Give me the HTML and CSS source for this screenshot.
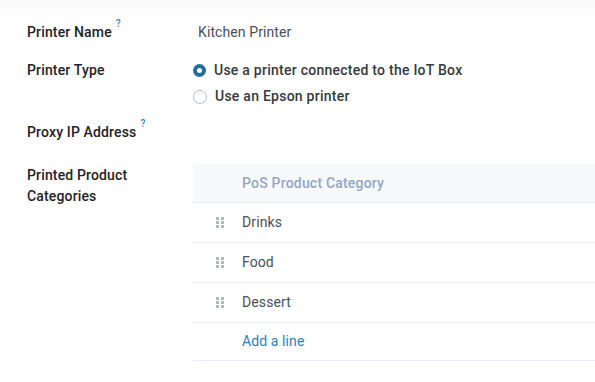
FILE: index.html
```html
<!DOCTYPE html>
<html lang="en">
<head>
    <meta charset="UTF-8">
    <title>Printer</title>
    <link rel="stylesheet" href="styles.css">
</head>
<body>
    <div class="sheet">
        <div class="field field-name">
            <div class="label">Printer Name<sup class="help">?</sup></div>
            <div class="value">Kitchen Printer</div>
        </div>
        <div class="field field-type">
            <div class="label">Printer Type</div>
            <div class="value radios">
                <div class="radio checked"><span class="dot"></span>Use a printer connected to the IoT Box</div>
                <div class="radio"><span class="dot"></span>Use an Epson printer</div>
            </div>
        </div>
        <div class="field field-proxy">
            <div class="label">Proxy IP Address<sup class="help">?</sup></div>
            <div class="value"></div>
        </div>
        <div class="field field-categ">
            <div class="label">Printed Product Categories</div>
            <div class="value">
                <table class="list">
                    <thead>
                        <tr><th class="handle-col"></th><th>PoS Product Category</th></tr>
                    </thead>
                    <tbody>
                        <tr><td class="handle-col"><svg class="handle" width="8" height="11" viewBox="0 0 8 11"><rect x="0" y="0" width="3" height="3"/><rect x="5" y="0" width="3" height="3"/><rect x="0" y="4" width="3" height="3"/><rect x="5" y="4" width="3" height="3"/><rect x="0" y="8" width="3" height="3"/><rect x="5" y="8" width="3" height="3"/></svg></td><td>Drinks</td></tr>
                        <tr><td class="handle-col"><svg class="handle" width="8" height="11" viewBox="0 0 8 11"><rect x="0" y="0" width="3" height="3"/><rect x="5" y="0" width="3" height="3"/><rect x="0" y="4" width="3" height="3"/><rect x="5" y="4" width="3" height="3"/><rect x="0" y="8" width="3" height="3"/><rect x="5" y="8" width="3" height="3"/></svg></td><td>Food</td></tr>
                        <tr><td class="handle-col"><svg class="handle" width="8" height="11" viewBox="0 0 8 11"><rect x="0" y="0" width="3" height="3"/><rect x="5" y="0" width="3" height="3"/><rect x="0" y="4" width="3" height="3"/><rect x="5" y="4" width="3" height="3"/><rect x="0" y="8" width="3" height="3"/><rect x="5" y="8" width="3" height="3"/></svg></td><td>Dessert</td></tr>
                        <tr class="add-row"><td class="handle-col"></td><td><a href="#">Add a line</a></td></tr>
                    </tbody>
                </table>
            </div>
        </div>
    </div>
</body>
</html>
```

FILE: styles.css
```css
html {
    background: #fff;
}
body {
    margin: 0;
    min-height: 382px;
    background: #fff linear-gradient(#f9f9f9, #ffffff 22px) no-repeat;
    background-size: 100% 22px;
    font-family: Roboto, "Liberation Sans", sans-serif;
    font-size: 14px;
    line-height: 21px;
    color: #212529;
}
.sheet {
    padding: 22px 0 0 27px;
}
.field {
    display: grid;
    grid-template-columns: 166px 1fr;
}
.label {
    font-weight: 500;
    letter-spacing: 0.15px;
    color: #1f2326;
}
.help {
    color: #2f86d1;
    font-size: 10px;
    font-weight: 500;
    vertical-align: top;
    line-height: 10px;
    margin-left: 4px;
    position: relative;
    top: -3px;
}
.field-name {
    margin-bottom: 17px;
}
.field-name .value {
    padding-left: 5px;
    color: #495057;
    letter-spacing: 0.1px;
}
.field-type {
    margin-bottom: 15px;
}
.radios {
    display: flex;
    flex-direction: column;
    gap: 5px;
}
.radio {
    display: flex;
    align-items: center;
    font-weight: 500;
    letter-spacing: 0.25px;
    color: #343a40;
}
.radio .dot {
    width: 12px;
    height: 12px;
    border: 1px solid #b7bcc1;
    border-radius: 50%;
    background: #fff;
    margin-right: 8px;
    box-sizing: content-box;
}
.radio.checked .dot {
    border: 4px solid #236f97;
    width: 5px;
    height: 5px;
}
.field-proxy {
    margin-bottom: 21px;
}
.field-categ .label {
    width: 120px;
    padding-top: 1px;
}
.list {
    width: 100%;
    border-collapse: collapse;
}
.list th {
    background: #f8f9fb;
    color: #93a7c6;
    font-weight: 500;
    letter-spacing: 0.2px;
    text-align: left;
    height: 38px;
    border-bottom: 1px solid #e5eaf0;
    padding: 0;
}
.list td {
    height: 39px;
    border-bottom: 1px solid #e7edf3;
    padding: 0;
    color: #4a5157;
    letter-spacing: 0.1px;
}
.list .add-row td {
    height: 37px;
}
.handle-col {
    width: 49px;
}
.handle {
    display: block;
    margin-left: 23px;
    fill: #b3b8bd;
}
.list a {
    color: #2f7fc0;
    text-decoration: none;
}
```
